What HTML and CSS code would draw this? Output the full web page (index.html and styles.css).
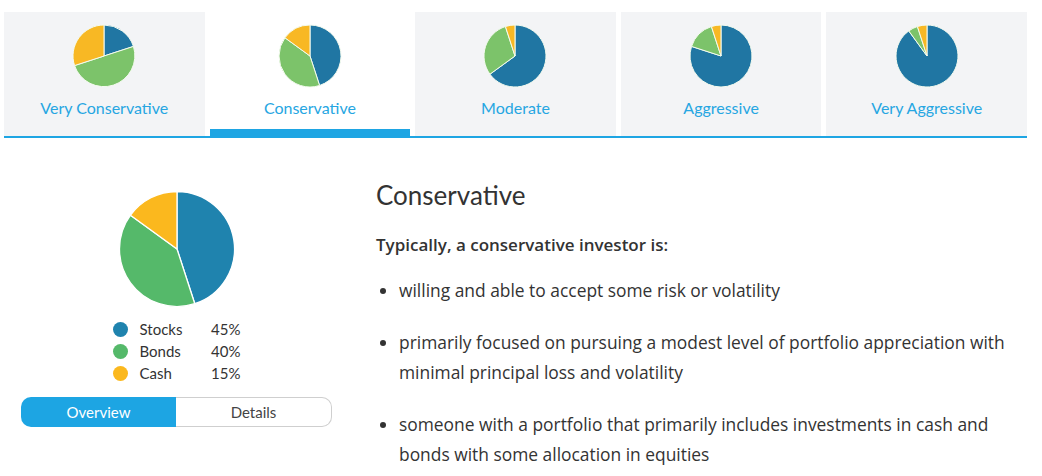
FILE: index.html
```html
<!DOCTYPE html>
<html lang="en">
<head>
    <meta charset="UTF-8">
    <meta name="viewport" content="width=device-width, initial-scale=1.0">
    <title>Investor Profiles</title>
    <link rel="stylesheet" href="styles.css">
</head>
<body>
    <!-- Profile tabs -->
    <div class="tabs">
        <div class="tab">
            <svg class="tab-pie" viewBox="-32 -32 64 64">
                <path class="s-stocks" d="M0 0 L0 -31 A31 31 0 0 1 29.48 -9.58 Z"/>
                <path class="s-bonds" d="M0 0 L29.48 -9.58 A31 31 0 0 1 -29.48 9.58 Z"/>
                <path class="s-cash" d="M0 0 L-29.48 9.58 A31 31 0 0 1 0 -31 Z"/>
            </svg>
            <span class="tab-label">Very Conservative</span>
        </div>
        <div class="tab active">
            <svg class="tab-pie" viewBox="-32 -32 64 64">
                <path class="s-stocks" d="M0 0 L0 -31 A31 31 0 0 1 9.58 29.48 Z"/>
                <path class="s-bonds" d="M0 0 L9.58 29.48 A31 31 0 0 1 -25.08 -18.22 Z"/>
                <path class="s-cash" d="M0 0 L-25.08 -18.22 A31 31 0 0 1 0 -31 Z"/>
            </svg>
            <span class="tab-label">Conservative</span>
        </div>
        <div class="tab">
            <svg class="tab-pie" viewBox="-32 -32 64 64">
                <path class="s-stocks" d="M0 0 L0 -31 A31 31 0 1 1 -25.08 18.22 Z"/>
                <path class="s-bonds" d="M0 0 L-25.08 18.22 A31 31 0 0 1 -9.58 -29.48 Z"/>
                <path class="s-cash" d="M0 0 L-9.58 -29.48 A31 31 0 0 1 0 -31 Z"/>
            </svg>
            <span class="tab-label">Moderate</span>
        </div>
        <div class="tab">
            <svg class="tab-pie" viewBox="-32 -32 64 64">
                <path class="s-stocks" d="M0 0 L0 -31 A31 31 0 1 1 -29.48 -9.58 Z"/>
                <path class="s-bonds" d="M0 0 L-29.48 -9.58 A31 31 0 0 1 -9.58 -29.48 Z"/>
                <path class="s-cash" d="M0 0 L-9.58 -29.48 A31 31 0 0 1 0 -31 Z"/>
            </svg>
            <span class="tab-label">Aggressive</span>
        </div>
        <div class="tab">
            <svg class="tab-pie" viewBox="-32 -32 64 64">
                <path class="s-stocks" d="M0 0 L0 -31 A31 31 0 1 1 -18.22 -25.08 Z"/>
                <path class="s-bonds" d="M0 0 L-18.22 -25.08 A31 31 0 0 1 -9.58 -29.48 Z"/>
                <path class="s-cash" d="M0 0 L-9.58 -29.48 A31 31 0 0 1 0 -31 Z"/>
            </svg>
            <span class="tab-label">Very Aggressive</span>
        </div>
    </div>

    <!-- Selected profile -->
    <div class="content">
        <div class="summary">
            <svg class="main-pie" viewBox="-59 -59 118 118">
                <path class="m-stocks" d="M0 0 L0 -57.5 A57.5 57.5 0 0 1 17.77 54.69 Z"/>
                <path class="m-bonds" d="M0 0 L17.77 54.69 A57.5 57.5 0 0 1 -46.52 -33.80 Z"/>
                <path class="m-cash" d="M0 0 L-46.52 -33.80 A57.5 57.5 0 0 1 0 -57.5 Z"/>
            </svg>

            <div class="legend">
                <span class="dot stocks"></span><span>Stocks</span><span class="pct">45%</span>
                <span class="dot bonds"></span><span>Bonds</span><span class="pct">40%</span>
                <span class="dot cash"></span><span>Cash</span><span class="pct">15%</span>
            </div>

            <div class="switch">
                <button class="switch-btn on">Overview</button>
                <button class="switch-btn">Details</button>
            </div>
        </div>

        <div class="description">
            <h2>Conservative</h2>
            <p class="lead">Typically, a conservative investor is:</p>
            <ul>
                <li>willing and able to accept some risk or volatility</li>
                <li>primarily focused on pursuing a modest level of portfolio appreciation with minimal principal loss and volatility</li>
                <li>someone with a portfolio that primarily includes investments in cash and bonds with some allocation in equities</li>
            </ul>
        </div>
    </div>
</body>
</html>
```

FILE: styles.css
```css
/* General */
* {
    margin: 0;
    padding: 0;
    box-sizing: border-box;
}

body {
    font-family: Lato, "Open Sans", Arial, sans-serif;
    background-color: #fff;
    color: #333;
}

/* Tabs */
.tabs {
    display: grid;
    grid-template-columns: repeat(5, 1fr);
    gap: 5px;
    margin: 12px 15px 0 4px;
    border-bottom: 2px solid #1ea5e3;
}

.tab {
    height: 124px;
    background-color: #f3f4f6;
    display: flex;
    flex-direction: column;
    align-items: center;
    padding-top: 12px;
    cursor: pointer;
}

.tab.active {
    background-color: #fff;
    box-shadow: inset 0 -7px 0 #1ea5e3;
}

.tab-pie {
    width: 64px;
    height: 64px;
}

.tab-pie path {
    stroke: #f4fbef;
    stroke-width: 1;
    stroke-linejoin: round;
}

.s-stocks { fill: #2076a3; }
.s-bonds { fill: #7cc36a; }
.s-cash { fill: #f8b824; }

.tab-label {
    margin-top: 10px;
    font-size: 16px;
    color: #26a6e2;
}

/* Content */
.content {
    display: flex;
    gap: 44px;
    padding: 0 15px 0 21px;
}

.summary {
    width: 311px;
    flex-shrink: 0;
    display: flex;
    flex-direction: column;
    align-items: center;
}

.main-pie {
    width: 118px;
    height: 118px;
    margin-top: 52px;
}

.main-pie path {
    stroke: #fff;
    stroke-width: 1.3;
    stroke-linejoin: round;
}

.m-stocks { fill: #1f83ae; }
.m-bonds { fill: #55b96a; }
.m-cash { fill: #fbb81e; }

.legend {
    display: grid;
    grid-template-columns: 15px 1fr auto;
    column-gap: 12px;
    align-items: center;
    width: 128px;
    margin-top: 10px;
    font-size: 15px;
    line-height: 22px;
    color: #333;
}

.dot {
    width: 15px;
    height: 15px;
    border-radius: 50%;
}

.dot.stocks { background-color: #1f83ae; }
.dot.bonds { background-color: #55b96a; }
.dot.cash { background-color: #fbb81e; }

.pct {
    text-align: right;
}

.switch {
    display: flex;
    width: 311px;
    height: 30px;
    margin-top: 13px;
}

.switch-btn {
    flex: 1;
    font-family: inherit;
    font-size: 15px;
    color: #444;
    background-color: #fff;
    border: 1px solid #cfcfcf;
    border-left: none;
    border-radius: 0 10px 10px 0;
    cursor: pointer;
}

.switch-btn.on {
    color: #fff;
    background-color: #1da5e3;
    border: none;
    border-radius: 10px 0 0 10px;
}

/* Description */
.description {
    flex: 1;
    padding-top: 41px;
}

.description h2 {
    font-size: 26px;
    font-weight: 400;
    line-height: 32px;
    color: #333;
}

.lead {
    margin-top: 22px;
    font-family: "Open Sans", Lato, sans-serif;
    font-size: 17px;
    font-weight: 600;
    line-height: 24px;
}

.description ul {
    margin-top: 18px;
    list-style: none;
    font-family: "Open Sans", Lato, sans-serif;
}

.description li {
    position: relative;
    padding-left: 23px;
    margin-bottom: 22px;
    font-size: 17.4px;
    line-height: 30px;
}

.description li::before {
    content: "";
    position: absolute;
    left: 4px;
    top: 13px;
    width: 6px;
    height: 6px;
    border-radius: 50%;
    background-color: #333;
}
```
